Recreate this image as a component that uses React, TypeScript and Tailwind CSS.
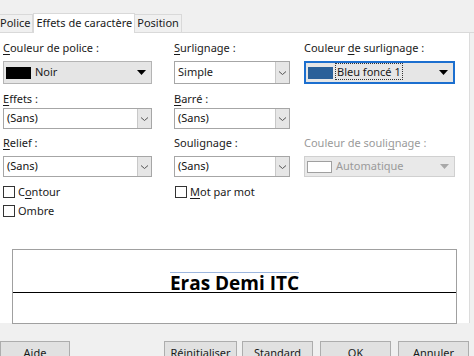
import React from "react";

const font = { fontFamily: '"Noto Sans", "Open Sans", sans-serif' };

function U({ children }: { children: React.ReactNode }) {
  return <span className="underline underline-offset-2">{children}</span>;
}

function Chevron() {
  return (
    <svg width="9" height="6" viewBox="0 0 9 6" className="text-[#555]">
      <path d="M1 1.5 L4.5 4.5 L8 1.5" fill="none" stroke="currentColor" strokeWidth="1" />
    </svg>
  );
}

function Triangle({ color = "#000" }: { color?: string }) {
  return (
    <svg width="9" height="5" viewBox="0 0 9 5">
      <path d="M0 0 H9 L4.5 5 Z" fill={color} />
    </svg>
  );
}

// plain list box with the small grey button on the right
function Combo({ value, w }: { value: string; w: string }) {
  return (
    <div className={`flex h-[21px] ${w} items-stretch border border-[#a6a6a6] bg-white`}>
      <span className="flex flex-1 items-center pl-[3px] text-[11px] text-[#111]">{value}</span>
      <span className="flex w-[14px] items-center justify-center border-l border-[#c8c8c8] bg-[#e6e6e6]">
        <Chevron />
      </span>
    </div>
  );
}

function Check({ children, className = "" }: { children: React.ReactNode; className?: string }) {
  return (
    <label className={`flex h-[14px] items-center gap-[3px] ${className}`}>
      <span className="h-[12px] w-[12px] border border-[#333] bg-white" />
      <span>{children}</span>
    </label>
  );
}

export default function App() {
  return (
    <div style={font} className="flex h-[356px] w-[474px] flex-col overflow-hidden bg-[#f0f0f0] text-[11px] text-[#1a1a1a]">
      {/* tabs */}
      <div className="flex h-[33px] items-end border-b border-[#d9d9d9] pt-[13px]">
        <div className="-ml-[2px] flex h-[18px] items-center border border-b-0 border-[#d9d9d9] bg-[#f0f0f0] pl-[1px] pr-[2px]">
          Police
        </div>
        <div className="relative top-px flex h-[20px] items-center border border-b-0 border-[#d9d9d9] bg-white px-[2px]">
          Effets de caractère
        </div>
        <div className="flex h-[18px] items-center border border-b-0 border-l-0 border-[#d9d9d9] bg-[#f0f0f0] px-[2px]">
          Position
        </div>
      </div>

      {/* page */}
      <div className="h-[290px] w-[470px] border-r border-[#dcdcdc] bg-white">
        <div className="flex pl-[3px] pt-[8px]">
          <div className="w-[171px]">
            <div className="h-[14px] leading-[14px]"><U>C</U>ouleur de police :</div>
            <div className="mt-[6px] flex h-[23px] w-[149px] items-center border border-[#b4b4b4] bg-[#e5e5e5] pl-[2px] pr-[5px]">
              <span className="h-[12px] w-[25px] bg-black" />
              <span className="ml-[4px] flex-1">Noir</span>
              <Triangle />
            </div>
          </div>
          <div className="w-[130px]">
            <div className="h-[14px] leading-[14px]"><U>S</U>urlignage :</div>
            <div className="mt-[6px]">
              <div className="flex h-[23px] w-[116px] items-stretch border border-[#a6a6a6] bg-white">
                <span className="flex flex-1 items-center pl-[3px]">Simple</span>
                <span className="flex w-[14px] items-center justify-center border-l border-[#c8c8c8] bg-[#e6e6e6]">
                  <Chevron />
                </span>
              </div>
            </div>
          </div>
          <div className="w-[152px]">
            <div className="h-[14px] leading-[14px]">Couleur <U>d</U>e surlignage :</div>
            <div className="mt-[6px] flex h-[23px] w-[151px] items-center border-2 border-[#1c6fcf] bg-[#e6e6e6] pl-[2px] pr-[5px]">
              <span className="h-[12px] w-[25px] bg-[#2a6099]" />
              <span className="ml-[2px] flex-1">
                <span className="border border-dotted border-[#333] px-[1px]">Bleu foncé 1</span>
              </span>
              <Triangle />
            </div>
          </div>
        </div>

        <div className="flex pl-[3px] pt-[8px]">
          <div className="w-[171px]">
            <div className="h-[14px] leading-[14px]"><U>E</U>ffets :</div>
            <div className="mt-[2px]"><Combo value="(Sans)" w="w-[149px]" /></div>
          </div>
          <div className="w-[130px]">
            <div className="h-[14px] leading-[14px]"><U>B</U>arré :</div>
            <div className="mt-[2px]"><Combo value="(Sans)" w="w-[116px]" /></div>
          </div>
        </div>

        <div className="flex pl-[3px] pt-[7px]">
          <div className="w-[171px]">
            <div className="h-[14px] leading-[14px]"><U>R</U>elief :</div>
            <div className="mt-[6px]"><Combo value="(Sans)" w="w-[149px]" /></div>
          </div>
          <div className="w-[130px]">
            <div className="h-[14px] leading-[14px]">Soulignage :</div>
            <div className="mt-[6px]"><Combo value="(Sans)" w="w-[116px]" /></div>
          </div>
          <div className="w-[152px] text-[#9a9a9a]">
            <div className="h-[14px] leading-[14px]">Couleur de souli<U>g</U>nage :</div>
            <div className="mt-[6px] flex h-[21px] w-[151px] items-center border border-[#d0d0d0] bg-[#e9e9e9] pl-[2px] pr-[5px]">
              <span className="h-[12px] w-[25px] border border-[#a0a0a0] bg-white" />
              <span className="ml-[4px] flex-1">Automatique</span>
              <Triangle color="#a8a8a8" />
            </div>
          </div>
        </div>

        <div className="flex pl-[3px] pt-[8px]">
          <div className="w-[172px]">
            <Check>C<U>o</U>ntour</Check>
            <Check className="mt-[5px]">Ombre</Check>
          </div>
          <Check><U>M</U>ot par mot</Check>
        </div>

        {/* preview */}
        <div className="ml-[12px] mt-[31px] h-[75px] w-[445px] border border-[#a0a0a0]">
          <div className="flex h-[42px] items-end justify-center">
            <span
              style={{ fontFamily: '"Open Sans", "Noto Sans", sans-serif' }}
              className="inline-block border-t border-[#9cb6de] pt-[1px] text-[19px] font-bold leading-[18px] text-black"
            >
              Eras Demi ITC
            </span>
          </div>
          <div className="h-px bg-black" />
        </div>
      </div>

      {/* buttons */}
      <div className="flex pt-[18px] text-[11px]">
        <button className="flex h-[24px] w-[70px] items-center justify-center border border-[#adadad] bg-[#e1e1e1]">Aide</button>
        <div className="ml-[94px] flex gap-[5px]">
          <button className="flex h-[24px] w-[73px] items-center justify-center border border-[#adadad] bg-[#e1e1e1]">Réinitialiser</button>
          <button className="flex h-[24px] w-[71px] items-center justify-center border border-[#adadad] bg-[#e1e1e1]">Standard</button>
          <button className="ml-[2px] flex h-[24px] w-[71px] items-center justify-center border border-[#adadad] bg-[#e1e1e1]">OK</button>
          <button className="ml-[2px] flex h-[24px] w-[71px] items-center justify-center border border-[#adadad] bg-[#e1e1e1]">Annuler</button>
        </div>
      </div>
    </div>
  );
}
